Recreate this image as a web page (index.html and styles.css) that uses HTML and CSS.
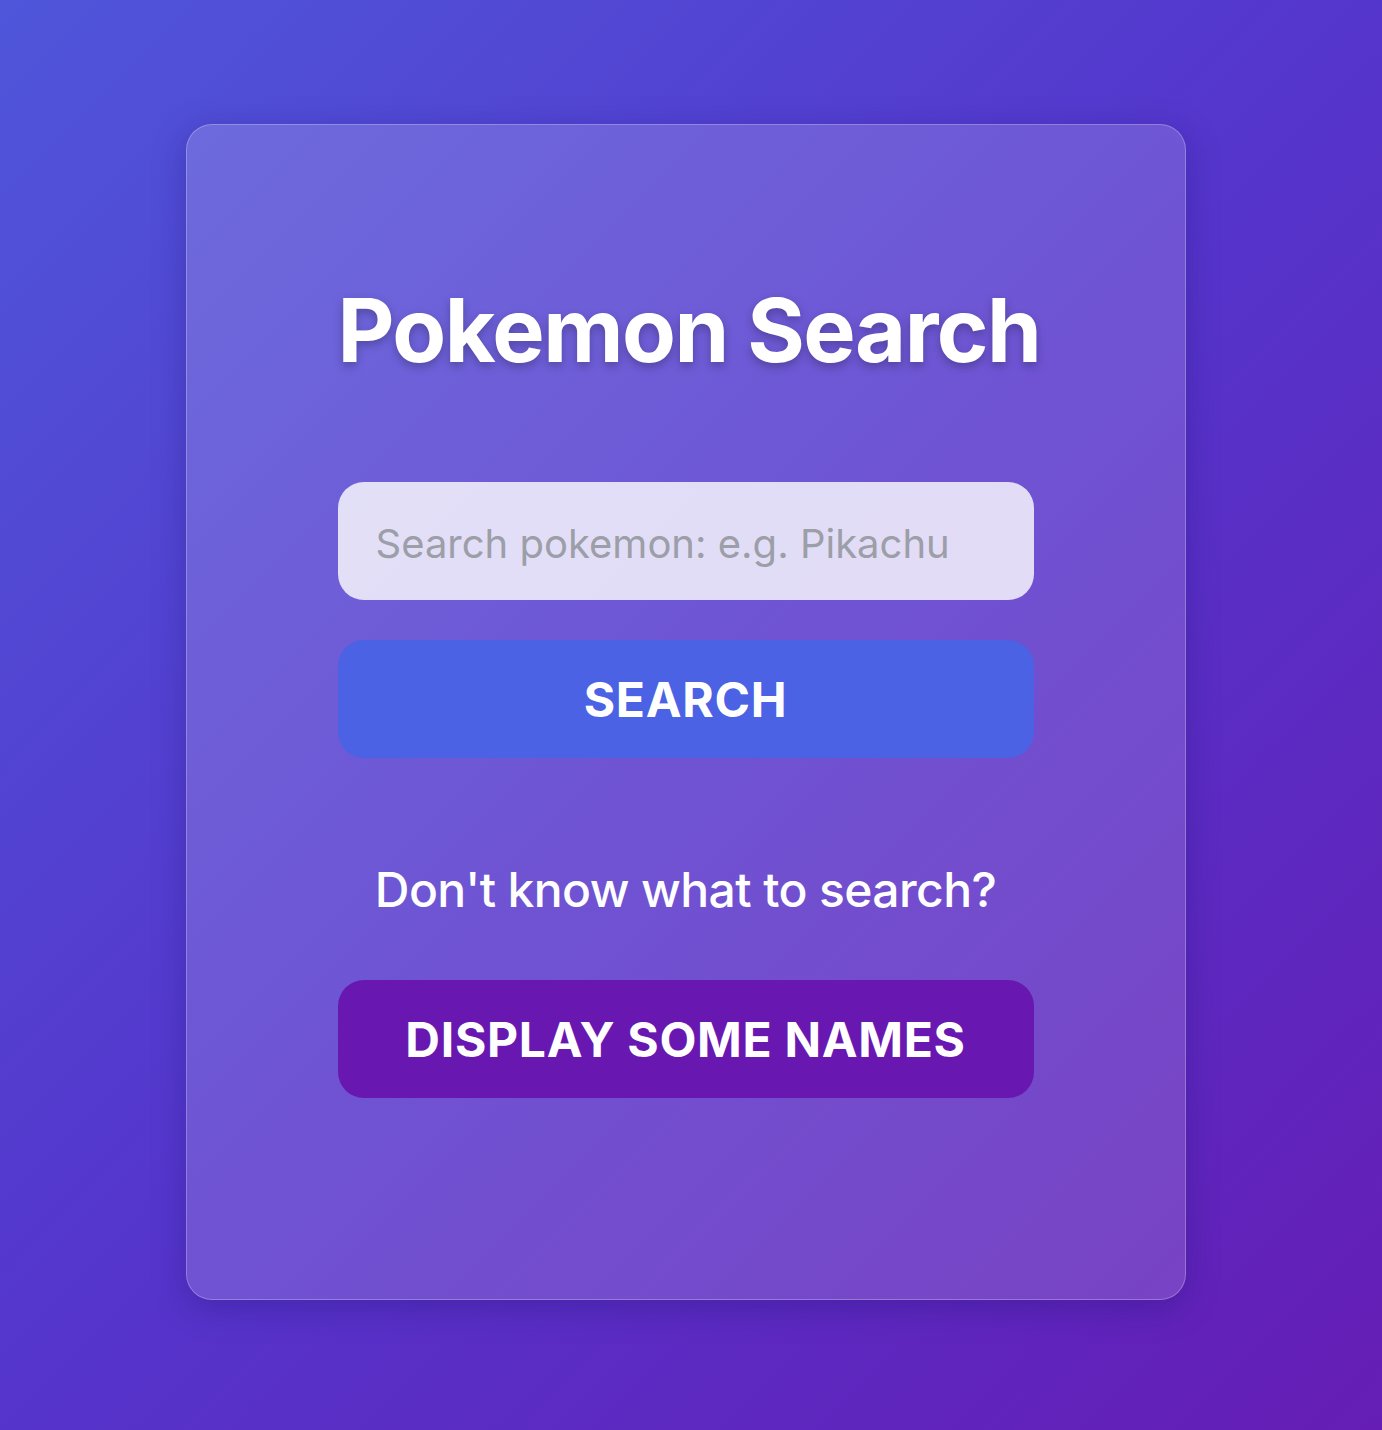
FILE: index.html
```html
<!DOCTYPE html>
<html lang="en">
<head>
<meta charset="utf-8">
<title>Pokemon Search</title>
<link rel="stylesheet" href="styles.css">
</head>
<body>
<div class="page">
  <main class="card">
    <h1 class="title">Pokemon Search</h1>
    <form class="search-form">
      <input class="search-input" type="text" placeholder="Search pokemon: e.g. Pikachu">
      <button class="btn btn-search" type="button">SEARCH</button>
    </form>
    <p class="hint">Don't know what to search?</p>
    <button class="btn btn-names" type="button">DISPLAY SOME NAMES</button>
  </main>
</div>
</body>
</html>
```

FILE: styles.css
```css
html, body {
  margin: 0;
  padding: 0;
}
body {
  width: 1382px;
  height: 1430px;
  overflow: hidden;
  background: linear-gradient(135deg, #4f56da 0%, #5535cc 50%, #651db5 100%);
  font-family: Inter, "Noto Sans", "Liberation Sans", sans-serif;
  color: #fff;
}
.page {
  width: 1371px;
  padding-top: 124px;
  display: flex;
  justify-content: center;
}
.card {
  box-sizing: border-box;
  width: 1000px;
  height: 1176px;
  padding: 150px 151px 0;
  border-radius: 26px;
  background: linear-gradient(135deg, rgba(255,255,255,0.16), rgba(255,255,255,0.15));
  border: 1.5px solid rgba(255,255,255,0.25);
  box-shadow: 0 8px 32px rgba(31, 20, 120, 0.35);
  display: flex;
  flex-direction: column;
  align-items: stretch;
}
.title {
  margin: 0;
  font-size: 88px;
  line-height: 110px;
  font-weight: 700;
  text-align: center;
  white-space: nowrap;
  letter-spacing: -1.5px;
  text-shadow: 0 4px 10px rgba(0, 0, 0, 0.25);
}
.search-form {
  margin-top: 97px;
  display: flex;
  flex-direction: column;
  gap: 40px;
}
.search-input {
  box-sizing: border-box;
  height: 118px;
  border: none;
  outline: none;
  border-radius: 26px;
  padding: 4px 38px 0;
  background: rgba(255, 255, 255, 0.8);
  font-family: inherit;
  font-size: 40px;
  color: #333;
}
.search-input::placeholder {
  color: #9c9ea8;
}
.btn {
  box-sizing: border-box;
  height: 118px;
  border: none;
  border-radius: 26px;
  font-family: inherit;
  font-weight: 700;
  font-size: 48px;
  color: #fff;
  letter-spacing: 0.7px;
  cursor: pointer;
}
.btn-search {
  background: #4a62e3;
}
.btn-names {
  background: #6818b0;
}
.hint {
  margin: 103px 0 61px;
  font-size: 48px;
  line-height: 58px;
  font-weight: 500;
  letter-spacing: -0.6px;
  text-align: center;
}
```
